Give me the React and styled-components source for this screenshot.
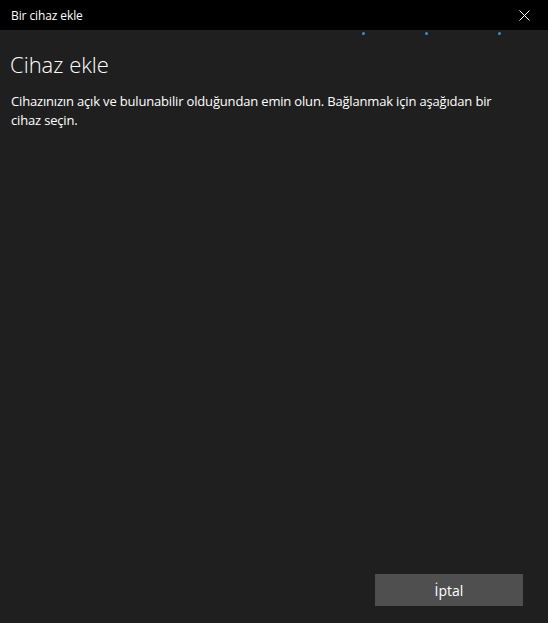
import styled, { createGlobalStyle } from "styled-components";

const GlobalStyle = createGlobalStyle`
    html, body {
        margin: 0;
        padding: 0;
        background: #1f1f1f;
    }
    #root {
        height: 623px;
    }
`;

const Window = styled.div`
    display: flex;
    flex-direction: column;
    width: 548px;
    height: 623px;
    background: #1f1f1f;
    color: #ffffff;
    font-family: "Open Sans", "Noto Sans", sans-serif;
    overflow: hidden;
`;

const TitleBar = styled.div`
    display: flex;
    align-items: center;
    justify-content: space-between;
    height: 30px;
    flex-shrink: 0;
    padding: 0 18px 0 11px;
    background: #000000;
    font-size: 12px;
    letter-spacing: -0.1px;
`;

const CloseButton = styled.div`
    display: flex;
    width: 11px;
    height: 11px;
    align-items: center;
    justify-content: center;
`;

const Progress = styled.div`
    position: relative;
    height: 6px;
    flex-shrink: 0;
`;

const Dot = styled.span`
    position: absolute;
    top: 2px;
    width: 3px;
    height: 3px;
    border-radius: 50%;
    background: #3a91cc;
`;

const Content = styled.div`
    display: flex;
    flex-direction: column;
    flex: 1;
    padding: 13px 10px 0 10px;
`;

const Heading = styled.h1`
    margin: 0 0 13px 0;
    font-size: 22px;
    font-weight: 300;
    line-height: 30px;
`;

const Description = styled.p`
    margin: 0 0 0 1px;
    width: 505px;
    font-size: 13px;
    line-height: 19px;
    letter-spacing: -0.17px;
`;

const Footer = styled.div`
    display: flex;
    justify-content: flex-end;
    margin-top: auto;
    padding: 0 15px 17px 0;
`;

const Button = styled.button`
    width: 148px;
    height: 32px;
    border: none;
    background: #4f4f4f;
    color: #ffffff;
    font-family: inherit;
    font-size: 14px;
`;

export default function App() {
    return (
        <>
            <GlobalStyle />
            <Window>
                <TitleBar>
                    <span>Bir cihaz ekle</span>
                    <CloseButton>
                        <svg width="11" height="11" viewBox="0 0 11 11">
                            <path d="M0.5 0.5 L10.5 10.5 M10.5 0.5 L0.5 10.5" stroke="#ffffff" strokeWidth="1" />
                        </svg>
                    </CloseButton>
                </TitleBar>
                <Progress>
                    {[362, 425, 498].map((x) => (
                        <Dot key={x} style={{ left: x }} />
                    ))}
                </Progress>
                <Content>
                    <Heading>Cihaz ekle</Heading>
                    <Description>
                        Cihazınızın açık ve bulunabilir olduğundan emin olun. Bağlanmak için aşağıdan bir cihaz seçin.
                    </Description>
                    <Footer>
                        <Button>İptal</Button>
                    </Footer>
                </Content>
            </Window>
        </>
    );
}
